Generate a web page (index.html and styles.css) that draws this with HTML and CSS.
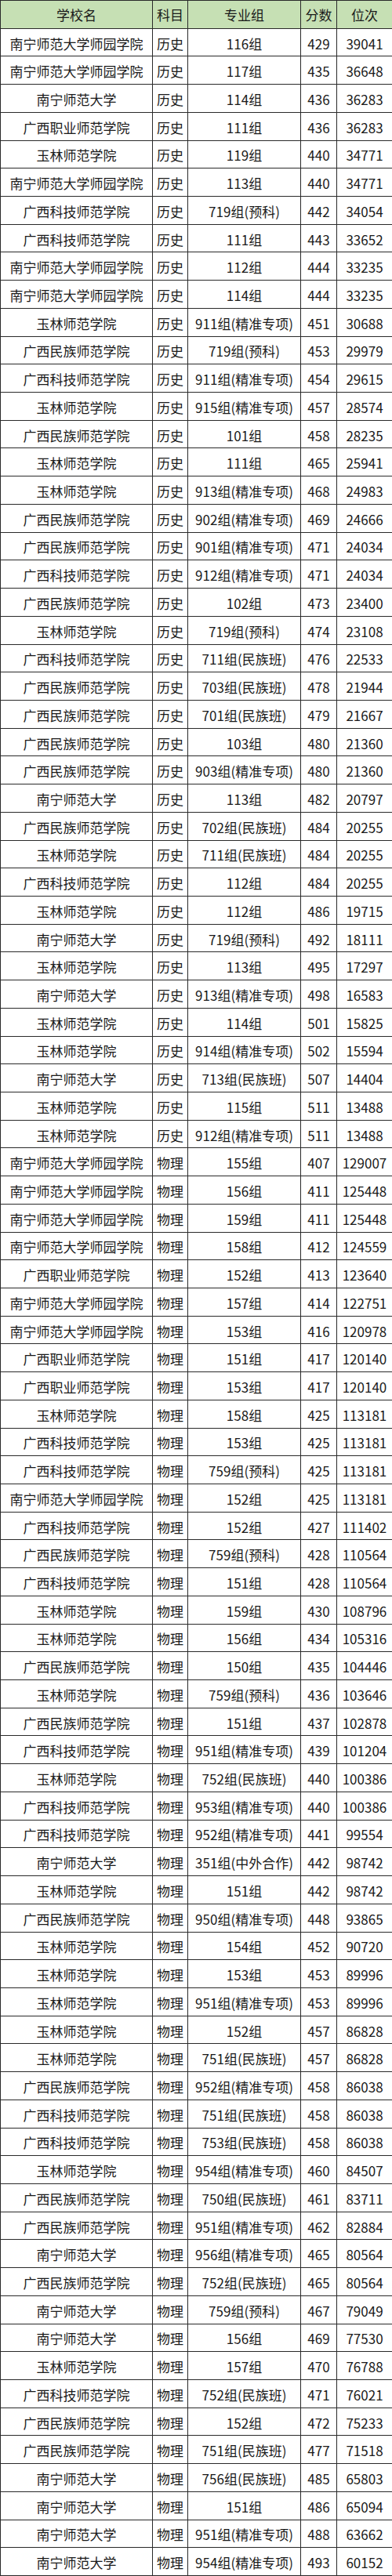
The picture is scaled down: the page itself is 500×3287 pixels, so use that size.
FILE: index.html
```html
<!DOCTYPE html>
<html lang="zh-CN">
<head>
<meta charset="utf-8">
<title>录取分数</title>
<link rel="stylesheet" href="styles.css">
</head>
<body>
<div class="sheet">
<div class="row head"><div>学校名</div><div>科目</div><div>专业组</div><div>分数</div><div>位次</div></div>
<div class="row"><div>南宁师范大学师园学院</div><div>历史</div><div>116组</div><div>429</div><div>39041</div></div>
<div class="row"><div>南宁师范大学师园学院</div><div>历史</div><div>117组</div><div>435</div><div>36648</div></div>
<div class="row"><div>南宁师范大学</div><div>历史</div><div>114组</div><div>436</div><div>36283</div></div>
<div class="row"><div>广西职业师范学院</div><div>历史</div><div>111组</div><div>436</div><div>36283</div></div>
<div class="row"><div>玉林师范学院</div><div>历史</div><div>119组</div><div>440</div><div>34771</div></div>
<div class="row"><div>南宁师范大学师园学院</div><div>历史</div><div>113组</div><div>440</div><div>34771</div></div>
<div class="row"><div>广西科技师范学院</div><div>历史</div><div>719组(预科)</div><div>442</div><div>34054</div></div>
<div class="row"><div>广西科技师范学院</div><div>历史</div><div>111组</div><div>443</div><div>33652</div></div>
<div class="row"><div>南宁师范大学师园学院</div><div>历史</div><div>112组</div><div>444</div><div>33235</div></div>
<div class="row"><div>南宁师范大学师园学院</div><div>历史</div><div>114组</div><div>444</div><div>33235</div></div>
<div class="row"><div>玉林师范学院</div><div>历史</div><div>911组(精准专项)</div><div>451</div><div>30688</div></div>
<div class="row"><div>广西民族师范学院</div><div>历史</div><div>719组(预科)</div><div>453</div><div>29979</div></div>
<div class="row"><div>广西科技师范学院</div><div>历史</div><div>911组(精准专项)</div><div>454</div><div>29615</div></div>
<div class="row"><div>玉林师范学院</div><div>历史</div><div>915组(精准专项)</div><div>457</div><div>28574</div></div>
<div class="row"><div>广西民族师范学院</div><div>历史</div><div>101组</div><div>458</div><div>28235</div></div>
<div class="row"><div>玉林师范学院</div><div>历史</div><div>111组</div><div>465</div><div>25941</div></div>
<div class="row"><div>玉林师范学院</div><div>历史</div><div>913组(精准专项)</div><div>468</div><div>24983</div></div>
<div class="row"><div>广西民族师范学院</div><div>历史</div><div>902组(精准专项)</div><div>469</div><div>24666</div></div>
<div class="row"><div>广西民族师范学院</div><div>历史</div><div>901组(精准专项)</div><div>471</div><div>24034</div></div>
<div class="row"><div>广西科技师范学院</div><div>历史</div><div>912组(精准专项)</div><div>471</div><div>24034</div></div>
<div class="row"><div>广西民族师范学院</div><div>历史</div><div>102组</div><div>473</div><div>23400</div></div>
<div class="row"><div>玉林师范学院</div><div>历史</div><div>719组(预科)</div><div>474</div><div>23108</div></div>
<div class="row"><div>广西科技师范学院</div><div>历史</div><div>711组(民族班)</div><div>476</div><div>22533</div></div>
<div class="row"><div>广西民族师范学院</div><div>历史</div><div>703组(民族班)</div><div>478</div><div>21944</div></div>
<div class="row"><div>广西民族师范学院</div><div>历史</div><div>701组(民族班)</div><div>479</div><div>21667</div></div>
<div class="row"><div>广西民族师范学院</div><div>历史</div><div>103组</div><div>480</div><div>21360</div></div>
<div class="row"><div>广西民族师范学院</div><div>历史</div><div>903组(精准专项)</div><div>480</div><div>21360</div></div>
<div class="row"><div>南宁师范大学</div><div>历史</div><div>113组</div><div>482</div><div>20797</div></div>
<div class="row"><div>广西民族师范学院</div><div>历史</div><div>702组(民族班)</div><div>484</div><div>20255</div></div>
<div class="row"><div>玉林师范学院</div><div>历史</div><div>711组(民族班)</div><div>484</div><div>20255</div></div>
<div class="row"><div>广西科技师范学院</div><div>历史</div><div>112组</div><div>484</div><div>20255</div></div>
<div class="row"><div>玉林师范学院</div><div>历史</div><div>112组</div><div>486</div><div>19715</div></div>
<div class="row"><div>南宁师范大学</div><div>历史</div><div>719组(预科)</div><div>492</div><div>18111</div></div>
<div class="row"><div>玉林师范学院</div><div>历史</div><div>113组</div><div>495</div><div>17297</div></div>
<div class="row"><div>南宁师范大学</div><div>历史</div><div>913组(精准专项)</div><div>498</div><div>16583</div></div>
<div class="row"><div>玉林师范学院</div><div>历史</div><div>114组</div><div>501</div><div>15825</div></div>
<div class="row"><div>玉林师范学院</div><div>历史</div><div>914组(精准专项)</div><div>502</div><div>15594</div></div>
<div class="row"><div>南宁师范大学</div><div>历史</div><div>713组(民族班)</div><div>507</div><div>14404</div></div>
<div class="row"><div>玉林师范学院</div><div>历史</div><div>115组</div><div>511</div><div>13488</div></div>
<div class="row"><div>玉林师范学院</div><div>历史</div><div>912组(精准专项)</div><div>511</div><div>13488</div></div>
<div class="row"><div>南宁师范大学师园学院</div><div>物理</div><div>155组</div><div>407</div><div>129007</div></div>
<div class="row"><div>南宁师范大学师园学院</div><div>物理</div><div>156组</div><div>411</div><div>125448</div></div>
<div class="row"><div>南宁师范大学师园学院</div><div>物理</div><div>159组</div><div>411</div><div>125448</div></div>
<div class="row"><div>南宁师范大学师园学院</div><div>物理</div><div>158组</div><div>412</div><div>124559</div></div>
<div class="row"><div>广西职业师范学院</div><div>物理</div><div>152组</div><div>413</div><div>123640</div></div>
<div class="row"><div>南宁师范大学师园学院</div><div>物理</div><div>157组</div><div>414</div><div>122751</div></div>
<div class="row"><div>南宁师范大学师园学院</div><div>物理</div><div>153组</div><div>416</div><div>120978</div></div>
<div class="row"><div>广西职业师范学院</div><div>物理</div><div>151组</div><div>417</div><div>120140</div></div>
<div class="row"><div>广西职业师范学院</div><div>物理</div><div>153组</div><div>417</div><div>120140</div></div>
<div class="row"><div>玉林师范学院</div><div>物理</div><div>158组</div><div>425</div><div>113181</div></div>
<div class="row"><div>广西科技师范学院</div><div>物理</div><div>153组</div><div>425</div><div>113181</div></div>
<div class="row"><div>广西科技师范学院</div><div>物理</div><div>759组(预科)</div><div>425</div><div>113181</div></div>
<div class="row"><div>南宁师范大学师园学院</div><div>物理</div><div>152组</div><div>425</div><div>113181</div></div>
<div class="row"><div>广西科技师范学院</div><div>物理</div><div>152组</div><div>427</div><div>111402</div></div>
<div class="row"><div>广西民族师范学院</div><div>物理</div><div>759组(预科)</div><div>428</div><div>110564</div></div>
<div class="row"><div>广西科技师范学院</div><div>物理</div><div>151组</div><div>428</div><div>110564</div></div>
<div class="row"><div>玉林师范学院</div><div>物理</div><div>159组</div><div>430</div><div>108796</div></div>
<div class="row"><div>玉林师范学院</div><div>物理</div><div>156组</div><div>434</div><div>105316</div></div>
<div class="row"><div>广西民族师范学院</div><div>物理</div><div>150组</div><div>435</div><div>104446</div></div>
<div class="row"><div>玉林师范学院</div><div>物理</div><div>759组(预科)</div><div>436</div><div>103646</div></div>
<div class="row"><div>广西民族师范学院</div><div>物理</div><div>151组</div><div>437</div><div>102878</div></div>
<div class="row"><div>广西科技师范学院</div><div>物理</div><div>951组(精准专项)</div><div>439</div><div>101204</div></div>
<div class="row"><div>玉林师范学院</div><div>物理</div><div>752组(民族班)</div><div>440</div><div>100386</div></div>
<div class="row"><div>广西科技师范学院</div><div>物理</div><div>953组(精准专项)</div><div>440</div><div>100386</div></div>
<div class="row"><div>广西科技师范学院</div><div>物理</div><div>952组(精准专项)</div><div>441</div><div>99554</div></div>
<div class="row"><div>南宁师范大学</div><div>物理</div><div>351组(中外合作)</div><div>442</div><div>98742</div></div>
<div class="row"><div>玉林师范学院</div><div>物理</div><div>151组</div><div>442</div><div>98742</div></div>
<div class="row"><div>广西民族师范学院</div><div>物理</div><div>950组(精准专项)</div><div>448</div><div>93865</div></div>
<div class="row"><div>玉林师范学院</div><div>物理</div><div>154组</div><div>452</div><div>90720</div></div>
<div class="row"><div>玉林师范学院</div><div>物理</div><div>153组</div><div>453</div><div>89996</div></div>
<div class="row"><div>玉林师范学院</div><div>物理</div><div>951组(精准专项)</div><div>453</div><div>89996</div></div>
<div class="row"><div>玉林师范学院</div><div>物理</div><div>152组</div><div>457</div><div>86828</div></div>
<div class="row"><div>玉林师范学院</div><div>物理</div><div>751组(民族班)</div><div>457</div><div>86828</div></div>
<div class="row"><div>广西民族师范学院</div><div>物理</div><div>952组(精准专项)</div><div>458</div><div>86038</div></div>
<div class="row"><div>广西科技师范学院</div><div>物理</div><div>751组(民族班)</div><div>458</div><div>86038</div></div>
<div class="row"><div>广西科技师范学院</div><div>物理</div><div>753组(民族班)</div><div>458</div><div>86038</div></div>
<div class="row"><div>玉林师范学院</div><div>物理</div><div>954组(精准专项)</div><div>460</div><div>84507</div></div>
<div class="row"><div>广西民族师范学院</div><div>物理</div><div>750组(民族班)</div><div>461</div><div>83711</div></div>
<div class="row"><div>广西民族师范学院</div><div>物理</div><div>951组(精准专项)</div><div>462</div><div>82884</div></div>
<div class="row"><div>南宁师范大学</div><div>物理</div><div>956组(精准专项)</div><div>465</div><div>80564</div></div>
<div class="row"><div>广西民族师范学院</div><div>物理</div><div>752组(民族班)</div><div>465</div><div>80564</div></div>
<div class="row"><div>南宁师范大学</div><div>物理</div><div>759组(预科)</div><div>467</div><div>79049</div></div>
<div class="row"><div>南宁师范大学</div><div>物理</div><div>156组</div><div>469</div><div>77530</div></div>
<div class="row"><div>玉林师范学院</div><div>物理</div><div>157组</div><div>470</div><div>76788</div></div>
<div class="row"><div>广西科技师范学院</div><div>物理</div><div>752组(民族班)</div><div>471</div><div>76021</div></div>
<div class="row"><div>广西民族师范学院</div><div>物理</div><div>152组</div><div>472</div><div>75233</div></div>
<div class="row"><div>广西民族师范学院</div><div>物理</div><div>751组(民族班)</div><div>477</div><div>71518</div></div>
<div class="row"><div>南宁师范大学</div><div>物理</div><div>756组(民族班)</div><div>485</div><div>65803</div></div>
<div class="row"><div>南宁师范大学</div><div>物理</div><div>151组</div><div>486</div><div>65094</div></div>
<div class="row"><div>南宁师范大学</div><div>物理</div><div>951组(精准专项)</div><div>488</div><div>63662</div></div>
<div class="row"><div>南宁师范大学</div><div>物理</div><div>954组(精准专项)</div><div>493</div><div>60152</div></div>
</div>
</body>
</html>
```
FILE: styles.css
```css
html, body {
  margin: 0;
  padding: 0;
  background: #ffffff;
}

.sheet {
  box-sizing: border-box;
  width: 500px;
  height: 3287px;
  display: grid;
  grid-template-columns: 193px 44px 143px 45px 1fr;
  grid-auto-rows: 1fr;
  gap: 1px;
  padding: 1px 0 1px 1px;
  background: #2a2a2a;
  font-family: "Noto Sans CJK SC", "Noto Sans", sans-serif;
  font-size: 17px;
  color: #1a1a1a;
}

.row {
  display: contents;
}

.row > div {
  background: #ffffff;
  display: flex;
  align-items: center;
  justify-content: center;
  white-space: nowrap;
  padding-top: 2px;
  box-sizing: border-box;
}

.row.head > div {
  background: #c6e0b4;
  padding-top: 0;
}
```
